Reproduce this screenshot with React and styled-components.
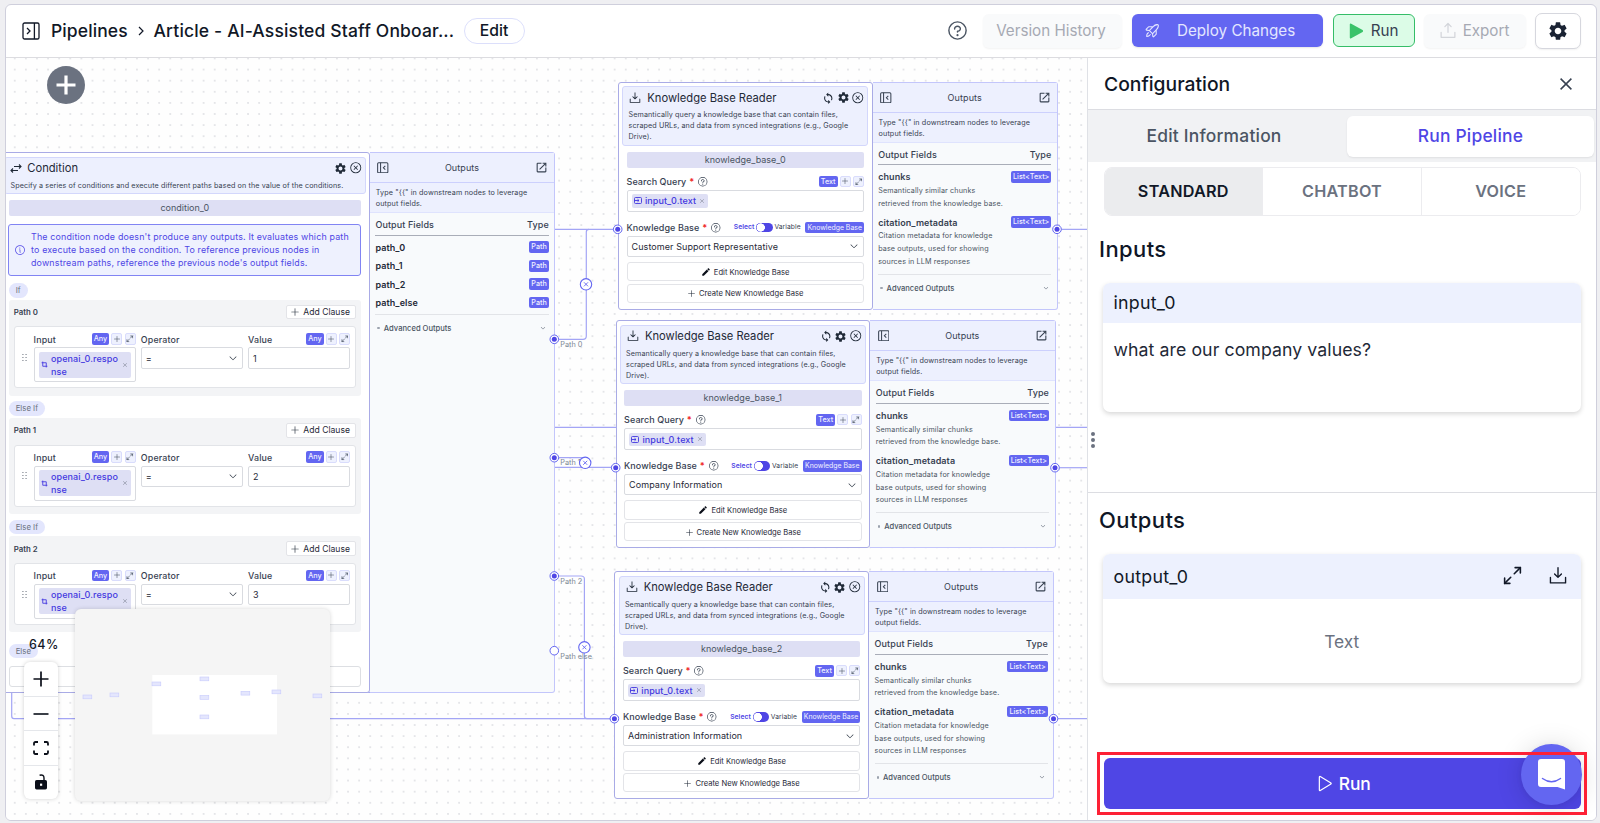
import styled, { createGlobalStyle, css } from 'styled-components'
import {
  PiCaretDown,
  PiDotsSixVertical,
  PiDownloadSimple,
  PiPlay,
  PiPlus,
  PiQuestion,
  PiRocketLaunch,
  PiUploadSimple,
  PiX,
  PiXCircle,
  PiInfo
} from 'react-icons/pi'
import { MdSettings, MdEdit, MdOpenInNew, MdSync } from 'react-icons/md'
import { Maximize2 } from 'lucide-react'

const knowledgeBases = [
  { id: 'knowledge_base_0', x: 612, y: 24, value: 'Customer Support Representative' },
  { id: 'knowledge_base_1', x: 609.6, y: 262.4, value: 'Company Information' },
  { id: 'knowledge_base_2', x: 608.4, y: 513.4, value: 'Administration Information' }
]

const clauses = [
  { tag: 'If', path: 'Path 0', value: '1' },
  { tag: 'Else If', path: 'Path 1', value: '2' },
  { tag: 'Else If', path: 'Path 2', value: '3' }
]

const edges = [
  'M540 171.3H612',
  'M540 369.3H1081',
  'M540 409.3H610',
  'M548 281.3H577Q580.3 281.3 580.3 278V174Q580.3 171.3 583 171.3',
  'M548 399.7H579V409.3',
  'M548 518H575Q578.4 518 578.4 521V658Q578.4 660.7 581 660.7H608',
  'M5.7 634V658Q5.7 660.7 8 660.7H608',
  'M0 634.5H364',
  'M1051 171.3H1081',
  'M1049 409.7H1081',
  'M1047.5 660.7H1081'
]

const handles = [
  [548.3, 281.3], [548.3, 399.7], [548.3, 518],
  [611.7, 171.3], [609.7, 409.7], [608.4, 660.7],
  [1051, 171.3], [1049, 409.7], [1047.5, 660.7]
]

const edgeButtons = [[580, 226.3], [579.2, 404.8], [578.4, 589.3]]

const edgeLabels = [
  { x: 554.3, y: 281, text: 'Path 0' },
  { x: 554.3, y: 399.3, text: 'Path 1' },
  { x: 554.3, y: 517.6, text: 'Path 2' },
  { x: 554.3, y: 592.6, text: 'Path else' }
]

const miniNodes = [
  [8, 86], [35, 84], [77, 73], [125, 68], [125, 86.5], [125, 106], [166, 82.3], [197, 81], [238, 85]
]

function PanelIcon({ size, flip }) {
  return (
    <svg width={size} height={size} viewBox="0 0 18 18" fill="none" stroke="currentColor" strokeWidth={flip ? 1.6 : 1.3}>
      <g transform={flip ? 'matrix(-1 0 0 1 18 0)' : undefined}>
        <rect x="1" y="1" width="16" height="16" rx="1.6" />
        <path d="M12.4 1v16" />
        <path d="M5 6L8 9L5 12" />
      </g>
    </svg>
  )
}

function SwapIcon() {
  return (
    <svg width="12" height="9" viewBox="0 0 24 16" fill="none" stroke="currentColor" strokeWidth="2.2">
      <path d="M8 4h14M18 0l4 4-4 4" />
      <path d="M16 12H2M6 8l-4 4 4 4" />
    </svg>
  )
}

function TopBar() {
  return (
    <Bar>
      <PanelIcon size={18} />
      <Crumb>Pipelines</Crumb>
      <Separator>
        <svg width="6" height="10" viewBox="0 0 6 10" fill="none" stroke="currentColor" strokeWidth="1.2">
          <path d="M1 1l4 4-4 4" />
        </svg>
      </Separator>
      <Title>Article - AI-Assisted Staff Onboar...</Title>
      <EditPill>Edit</EditPill>
      <Spacer />
      <HelpIcon />
      <BarButton $w={139} $left={14} $muted>Version History</BarButton>
      <BarButton $w={191} $h={33} $left={9.5} $primary>
        <PiRocketLaunch size={17} />
        <span>Deploy Changes</span>
      </BarButton>
      <BarButton $w={82} $h={33} $left={10} $run>
        <svg width="15" height="16" viewBox="0 0 15 16" fill="#3ac26a">
          <path d="M.8 1.5Q.8 0 2.2.8L13.6 7.1Q14.8 8 13.6 8.9L2.2 15.2Q.8 16 .8 14.5z" />
        </svg>
        <span>Run</span>
      </BarButton>
      <BarButton $w={102} $left={9.5} $muted>
        <PiUploadSimple size={20} />
        <span>Export</span>
      </BarButton>
      <GearButton>
        <MdSettings size={22} />
      </GearButton>
    </Bar>
  )
}

function TypeTools({ type }) {
  return (
    <Tools>
      <Badge>{type}</Badge>
      <Tool><PiPlus /></Tool>
      <Tool><Maximize2 size={7.5} /></Tool>
    </Tools>
  )
}

function AdvancedOutputs() {
  return (
    <Advanced>
      <Bullet />
      <span>Advanced Outputs</span>
      <PiCaretDown size={6} color="#6b7280" />
    </Advanced>
  )
}

function OutputsPanel({ width, children }) {
  return (
    <Side $w={width}>
      <SideHeader>
        <PanelIcon size={11.5} flip />
        <span>Outputs</span>
        <MdOpenInNew size={13} />
      </SideHeader>
      <SideHint>Type "{'{{'}" in downstream nodes to leverage<br />output fields.</SideHint>
      <Fields>
        <FieldsHead>
          <span>Output Fields</span>
          <span>Type</span>
        </FieldsHead>
        {children}
        <AdvancedOutputs />
      </Fields>
    </Side>
  )
}

function ConditionNode() {
  return (
    <Node $x={-6} $y={94.3} $h={540.4}>
      <Main $w={369.8}>
        <NodeHeader $h={37.7}>
          <NodeTitle>
            <SwapIcon />
            <h3>Condition</h3>
            <MdSettings size={13} />
            <PiXCircle size={13.5} />
          </NodeTitle>
          <p>Specify a series of conditions and execute different paths based on the value of the conditions.</p>
        </NodeHeader>
        <Body>
          <IdBar>condition_0</IdBar>
          <Info>
            <PiInfo size={12} />
            <p>
              The condition node doesn't produce any outputs. It evaluates which path<br />
              to execute based on the condition. To reference previous nodes in<br />
              downstream paths, reference the previous node's output fields.
            </p>
          </Info>
          {clauses.map((clause) => (
            <Clause key={clause.path} {...clause} />
          ))}
          <Tag $last>Else</Tag>
          <ElseBox />
        </Body>
      </Main>
      <OutputsPanel width={185.6}>
        {['path_0', 'path_1', 'path_2', 'path_else'].map((name) => (
          <PathRow key={name}>
            <strong>{name}</strong>
            <Badge>Path</Badge>
          </PathRow>
        ))}
      </OutputsPanel>
    </Node>
  )
}

function Clause({ tag, path, value }) {
  return (
    <>
      <Tag>{tag}</Tag>
      <Group>
        <GroupHead>
          <strong>{path}</strong>
          <AddClause><PiPlus size={10} /> Add Clause</AddClause>
        </GroupHead>
        <ClauseCard>
          <Grip><PiDotsSixVertical size={11} /></Grip>
          <Cell>
            <CellLabel>Input<TypeTools type="Any" /></CellLabel>
            <Box $h={35}>
              <Chip $tall>
                <svg width="7" height="7" viewBox="0 0 12 12" fill="none" stroke="currentColor" strokeWidth="1.5">
                  <path d="M3 1v8h8M1 3h8v8" />
                </svg>
                <span>openai_0.respo<br />nse</span>
                <PiX size={6} color="#6b7280" />
              </Chip>
            </Box>
          </Cell>
          <Cell>
            <CellLabel>Operator</CellLabel>
            <Box $h={21.4}>=<PiCaretDown size={10} /></Box>
          </Cell>
          <Cell>
            <CellLabel>Value<TypeTools type="Any" /></CellLabel>
            <Box $h={21.4}>{value}</Box>
          </Cell>
        </ClauseCard>
      </Group>
    </>
  )
}

function KnowledgeNode({ id, x, y, value }) {
  return (
    <Node $x={x} $y={y} $h={228}>
      <Main $w={254.6}>
        <NodeHeader $h={59.7}>
          <NodeTitle>
            <PiDownloadSimple size={14} />
            <h3>Knowledge Base Reader</h3>
            <MdSync size={12.5} />
            <MdSettings size={13} />
            <PiXCircle size={13.5} />
          </NodeTitle>
          <p>
            Semantically query a knowledge base that can contain files,<br />
            scraped URLs, and data from synced integrations (e.g., Google<br />
            Drive).
          </p>
        </NodeHeader>
        <Body>
          <IdBar>{id}</IdBar>
          <LabelRow $top={7.7}>
            Search Query <b>*</b> <PiQuestion size={11.5} />
            <TypeTools type="Text" />
          </LabelRow>
          <Box $h={21.7}>
            <Chip>
              <svg width="8" height="7" viewBox="0 0 16 14" fill="none" stroke="currentColor" strokeWidth="1.8">
                <rect x="1" y="1" width="14" height="12" rx="2" />
                <path d="M1 7h9M7 4.4L10 7L7 9.6" />
              </svg>
              <span>input_0.text</span>
              <PiX size={6} color="#6b7280" />
            </Chip>
          </Box>
          <LabelRow $top={9.9}>
            Knowledge Base <b>*</b> <PiQuestion size={11.5} />
            <Toggle>
              <em>Select</em>
              <Switch />
              <span>Variable</span>
              <Badge $small>Knowledge Base</Badge>
            </Toggle>
          </LabelRow>
          <Box $h={20.7}>{value}<PiCaretDown size={10} /></Box>
          <NodeButton $top={5.3}><MdEdit size={10} color="#0b0f19" /> Edit Knowledge Base</NodeButton>
          <NodeButton $top={2.3}><PiPlus size={9} /> Create New Knowledge Base</NodeButton>
        </Body>
      </Main>
      <OutputsPanel width={185.4}>
        <OutputField>
          <div><strong>chunks</strong><Badge>List&lt;Text&gt;</Badge></div>
          <p>Semantically similar chunks<br />retrieved from the knowledge base.</p>
        </OutputField>
        <OutputField>
          <div><strong>citation_metadata</strong><Badge>List&lt;Text&gt;</Badge></div>
          <p>Citation metadata for knowledge<br />base outputs, used for showing<br />sources in LLM responses</p>
        </OutputField>
      </OutputsPanel>
    </Node>
  )
}

function Controls() {
  return (
    <ControlColumn>
      <Zoom>64%</Zoom>
      <ControlStack>
        <Control>
          <svg width="16" height="16" viewBox="0 0 16 16" stroke="#0b0f19" strokeWidth="1.7"><path d="M8 .5v15M.5 8h15" /></svg>
        </Control>
        <Control>
          <svg width="16" height="16" viewBox="0 0 16 16" stroke="#0b0f19" strokeWidth="1.6"><path d="M.5 8h15" /></svg>
        </Control>
        <Control>
          <svg width="16" height="14" viewBox="0 0 16 14" fill="none" stroke="#0b0f19" strokeWidth="1.8">
            <path d="M1 4.6V2.4Q1 1 2.4 1H5M11 1h2.6Q15 1 15 2.4v2.2M15 9.4v2.2Q15 13 13.6 13H11M5 13H2.4Q1 13 1 11.6V9.4" />
          </svg>
        </Control>
        <Control>
          <svg width="12" height="16" viewBox="0 0 12 16">
            <path d="M4.6 1.2Q9 .2 9 4v3" fill="none" stroke="#0b0f19" strokeWidth="1.4" />
            <rect y="6" width="12" height="9.4" rx="1.6" fill="#0b0f19" />
            <rect x="5" y="9.6" width="2.2" height="2.2" fill="#fff" />
          </svg>
        </Control>
      </ControlStack>
    </ControlColumn>
  )
}

function Canvas() {
  return (
    <Board>
      <Layer viewBox="0 0 1081 762">
        {edges.map((d) => (
          <path key={d} d={d} fill="none" stroke="#a3a5f5" strokeWidth="1.2" />
        ))}
      </Layer>
      {edgeLabels.map((label) => (
        <EdgeLabel key={label.text} $x={label.x} $y={label.y}>{label.text}</EdgeLabel>
      ))}
      <ConditionNode />
      {knowledgeBases.map((kb) => (
        <KnowledgeNode key={kb.id} {...kb} />
      ))}
      <Layer viewBox="0 0 1081 762">
        {handles.map(([x, y]) => (
          <g key={`${x}-${y}`}>
            <circle cx={x} cy={y} r="4.3" fill="#fff" stroke="#6366f1" />
            <circle cx={x} cy={y} r="2.5" fill="#4f46e5" />
          </g>
        ))}
        <circle cx="548.3" cy="592.7" r="4.3" fill="#fff" stroke="#6366f1" />
        {edgeButtons.map(([x, y]) => (
          <g key={y} stroke="#6366f1">
            <circle cx={x} cy={y} r="5.7" fill="#fff" strokeWidth="1.1" />
            <path d={`M${x - 2} ${y - 2}l4 4m0 -4l-4 4`} strokeWidth="0.9" />
          </g>
        ))}
      </Layer>
      <AddNode>
        <svg width="20" height="20" viewBox="0 0 20 20" stroke="#fff" strokeWidth="3.2"><path d="M10 .5v19M.5 10h19" /></svg>
      </AddNode>
      <MiniMap>
        <svg width="255" height="192" viewBox="0 0 255 192">
          <rect x="77.3" y="66" width="124.7" height="59.4" fill="#fff" />
          {miniNodes.map(([x, y]) => (
            <rect key={`${x}-${y}`} x={x} y={y} width="8.8" height="3.8" fill="#e4e6fd" stroke="#c7cafc" strokeWidth="0.6" />
          ))}
        </svg>
      </MiniMap>
      <Controls />
    </Board>
  )
}

function Configuration() {
  return (
    <Panel>
      <PanelTitle>
        <h2>Configuration</h2>
        <svg width="12" height="12" viewBox="0 0 12 12" stroke="#374151" strokeWidth="1.5"><path d="M.6 .6l10.8 10.8M11.4 .6L.6 11.4" /></svg>
      </PanelTitle>
      <Tabs>
        <Tab>Edit Information</Tab>
        <Tab $active>Run Pipeline</Tab>
      </Tabs>
      <Segments>
        <Segment $active>STANDARD</Segment>
        <Segment>CHATBOT</Segment>
        <Segment>VOICE</Segment>
      </Segments>
      <Section $h={275.5}>
        <SectionTitle>Inputs</SectionTitle>
        <Card>
          <CardHeader $h={40.3}>input_0</CardHeader>
          <CardText>what are our company values?</CardText>
        </Card>
        <DragDots><i /><i /><i /></DragDots>
      </Section>
      <Section $h={260.5} $line>
        <SectionTitle>Outputs</SectionTitle>
        <Card>
          <CardHeader $h={45}>
            output_0
            <CardIcons>
              <Maximize2 size={21} strokeWidth={1.8} />
              <PiDownloadSimple size={22} />
            </CardIcons>
          </CardHeader>
          <CardEmpty>Text</CardEmpty>
        </Card>
      </Section>
      <RunFrame>
        <RunButton>
          <PiPlay size={19} />
          Run
        </RunButton>
        <ChatBubble>
          <svg width="27" height="31" viewBox="0 0 27 31">
            <path d="M3 0H24Q27 0 27 3V30.6L19.5 28H3Q0 28 0 25V3Q0 0 3 0z" fill="#fff" />
            <path d="M4.5 19.5Q13.5 26 22.5 19.5" fill="none" stroke="#6366f1" strokeWidth="1.5" strokeLinecap="round" />
          </svg>
        </ChatBubble>
        <Highlight />
      </RunFrame>
    </Panel>
  )
}

export default function App() {
  return (
    <Page>
      <GlobalStyle />
      <Window>
        <TopBar />
        <Workspace>
          <Canvas />
          <Configuration />
        </Workspace>
      </Window>
    </Page>
  )
}

const GlobalStyle = createGlobalStyle`
  * {
    box-sizing: border-box;
  }

  body {
    margin: 0;
    font-family: Inter, sans-serif;
    color: #1f2937;
  }

  h2, h3, p {
    margin: 0;
    font-weight: 400;
  }

  svg {
    flex: none;
    display: block;
  }
`

const Page = styled.div`
  width: 1600px;
  height: 823px;
  padding: 4px 3px 2px 5px;
  background: #efeff2;
  overflow: hidden;
`

const Window = styled.div`
  display: flex;
  flex-direction: column;
  height: 817px;
  border: 1px solid #cfcfdc;
  border-radius: 6px;
  background: #fff;
  overflow: hidden;
`

const Bar = styled.header`
  display: flex;
  align-items: center;
  height: 53px;
  flex: none;
  padding: 0 15px 1px 15.5px;
  border-bottom: 1px solid #dcdce0;
  color: #111827;
`

const Crumb = styled.span`
  margin-left: 11.5px;
  width: 77px;
  font-size: 17.5px;
  font-weight: 500;
  letter-spacing: 0.1px;
  white-space: nowrap;
`

const Separator = styled.span`
  margin: 0 10px 0 9.5px;
`

const Title = styled.span`
  width: 300px;
  font-size: 17.5px;
  font-weight: 500;
  letter-spacing: 0.16px;
  white-space: nowrap;
`

const EditPill = styled.button`
  width: 61px;
  height: 26px;
  margin-left: 10px;
  border: 1px solid #dcdffb;
  border-radius: 13px;
  background: #fff;
  font: 500 15.7px Inter, sans-serif;
  color: #111827;
`

const Spacer = styled.div`
  flex: 1;
`

const HelpIcon = styled(PiQuestion)`
  width: 23px;
  height: 23px;
  color: #4b5563;
`

const BarButton = styled.button`
  display: flex;
  align-items: center;
  justify-content: center;
  flex: none;
  width: ${({ $w }) => $w}px;
  height: ${({ $h }) => $h || 34}px;
  margin-left: ${({ $left }) => $left}px;
  padding: 0;
  border: none;
  border-radius: 6px;
  font: 400 15.2px Inter, sans-serif;
  white-space: nowrap;

  ${({ $muted }) => $muted && css`
    padding-right: 3px;
    background: #f9fafb;
    color: #a6a9b3;
    box-shadow: 0 1px 2px rgba(0, 0, 0, 0.05);
    gap: 5px;
    svg { color: #d3d5da; }
  `}

  ${({ $primary }) => $primary && css`
    justify-content: flex-start;
    padding-left: 12px;
    gap: 16.5px;
    background: #6366f1;
    color: #e4e6ff;
    box-shadow: 0 1px 2px rgba(0, 0, 0, 0.1);
  `}

  ${({ $run }) => $run && css`
    gap: 7px;
    border: 1px solid #35bd68;
    background: #dcfce7;
    color: #374151;
  `}
`

const GearButton = styled.button`
  display: grid;
  place-items: center;
  flex: none;
  width: 46px;
  height: 36px;
  margin-left: 9px;
  padding: 0;
  border: 1px solid #d6d7de;
  border-radius: 7px;
  background: #fff;
  color: #1a2333;
  box-shadow: 0 1px 2px rgba(0, 0, 0, 0.06);
`

const Workspace = styled.div`
  display: flex;
  flex: 1;
`

const Board = styled.div`
  position: relative;
  width: 1081px;
  flex: none;
  overflow: hidden;
  background: #fefefe radial-gradient(circle, #e0e1e5 0.6px, transparent 1px) 3.2px 6px / 11.12px 11.12px;
`

const Layer = styled.svg`
  position: absolute;
  left: 0;
  top: 0;
  width: 1081px;
  height: 762px;
`

const EdgeLabel = styled.span`
  position: absolute;
  left: ${({ $x }) => $x}px;
  top: ${({ $y }) => $y}px;
  font-size: 7.3px;
  line-height: 12px;
  color: #7b8794;
`

const Node = styled.section`
  position: absolute;
  left: ${({ $x }) => $x}px;
  top: ${({ $y }) => $y}px;
  height: ${({ $h }) => $h}px;
  display: flex;
`

const Main = styled.div`
  position: relative;
  width: ${({ $w }) => $w}px;
  border: 1px solid #a9abe6;
  border-radius: 3px;
  background: #fff;
`

const NodeHeader = styled.div`
  height: ${({ $h }) => $h}px;
  margin: 3.3px 3.3px 0;
  padding: 0 2.4px 0 5.2px;
  border: 1px solid #d3d7fc;
  border-radius: 3px;
  background: #edf0fe;

  p {
    padding-top: 1.2px;
    font-size: 7.2px;
    line-height: 11px;
    letter-spacing: 0.1px;
    color: #374151;
    white-space: nowrap;
  }
`

const NodeTitle = styled.div`
  display: flex;
  align-items: center;
  gap: 1.8px;
  height: 21px;

  h3 {
    flex: 1;
    margin-left: 3px;
    font-size: 11.2px;
    white-space: nowrap;
  }
`

const Body = styled.div`
  padding: 6px 7.7px 0 7.5px;
`

const IdBar = styled.div`
  height: 16px;
  border-radius: 2px;
  background: #dedff4;
  font-size: 9px;
  line-height: 16.4px;
  text-align: center;
  color: #4b5563;
`

const Info = styled.div`
  display: flex;
  align-items: center;
  height: 51.6px;
  margin: 8px 0 7.3px -0.3px;
  padding-left: 5px;
  border: 1px solid #8184f3;
  border-radius: 3px;
  background: #eef1fe;
  color: #4f46e5;

  p {
    margin: -0.6px 0 0 4.8px;
    font-size: 8.9px;
    line-height: 13px;
    letter-spacing: 0.17px;
    white-space: nowrap;
  }
`

const Tag = styled.div`
  width: fit-content;
  height: 14.8px;
  margin-top: ${({ $last }) => ($last ? 11.6 : 0)}px;
  padding: 0 7.2px;
  border-radius: 8px;
  background: #e3e6fd;
  font-size: 7.8px;
  line-height: 15px;
  color: #6b7280;
`

const Group = styled.div`
  height: 95.7px;
  margin: 2px 0 5.7px;
  padding: 5.1px 5.3px 0;
  border-radius: 3px;
  background: #f3f4f6;
`

const GroupHead = styled.div`
  display: flex;
  align-items: center;
  justify-content: space-between;

  strong {
    font-size: 7.8px;
    font-weight: 600;
    color: #374151;
  }
`

const AddClause = styled.div`
  display: flex;
  align-items: center;
  justify-content: center;
  gap: 3px;
  width: 70.3px;
  height: 14.4px;
  padding-right: 1px;
  border: 1px solid #e3e4e8;
  border-radius: 2px;
  background: #fff;
  font-size: 8.6px;
`

const ClauseCard = styled.div`
  display: flex;
  gap: 5.3px;
  height: 62px;
  margin-top: 7px;
  padding: 5.8px 4.8px 0 4px;
  border: 1px solid #e2e4e8;
  border-radius: 3px;
  background: #fff;
`

const Grip = styled.div`
  width: 9.5px;
  padding-top: 19px;
  color: #374151;
`

const Cell = styled.div`
  flex: 1;
  min-width: 0;
`

const CellLabel = styled.div`
  display: flex;
  justify-content: space-between;
  align-items: center;
  height: 11.7px;
  margin-bottom: 2.4px;
  font-size: 8.9px;
  font-weight: 500;
  letter-spacing: 0.15px;
  color: #374151;
`

const Tools = styled.div`
  display: flex;
  gap: 2.2px;
  margin-left: auto;
`

const Badge = styled.span`
  height: 11.6px;
  padding: 0 2px;
  border-radius: 2px;
  background: #6366f1;
  font-size: ${({ $small }) => ($small ? 6.9 : 7.2)}px;
  font-weight: ${({ $small }) => ($small ? 400 : 500)};
  line-height: 11.6px;
  letter-spacing: 0;
  color: #f1f1ff;
  white-space: nowrap;
`

const Tool = styled.span`
  display: grid;
  place-items: center;
  width: 11px;
  height: 11.4px;
  border: 1px solid #d9dcfc;
  border-radius: 2px;
  background: #eef1fe;
  font-size: 8px;
  color: #374151;
`

const Box = styled.div`
  display: flex;
  align-items: center;
  justify-content: space-between;
  height: ${({ $h }) => $h}px;
  padding: 0 4px;
  border: 1px solid #d9dbe0;
  border-radius: 2px;
  background: #fff;
  font-size: 9px;
  letter-spacing: 0.08px;
  white-space: nowrap;
`

const Chip = styled.div`
  display: flex;
  align-items: center;
  gap: 3px;
  width: ${({ $tall }) => ($tall ? '93px' : 'auto')};
  height: ${({ $tall }) => ($tall ? 26.6 : 13.4)}px;
  padding: 0 3px 0 2.4px;
  border-radius: 2px;
  background: #dedff4;
  font-size: 9px;
  font-weight: 500;
  letter-spacing: 0.1px;
  line-height: 13.3px;
  color: #4338e0;

  span {
    flex: 1;
  }
`

const ElseBox = styled.div`
  height: 20.8px;
  margin-top: 7.6px;
  border: 1px solid #dddfe3;
  border-radius: 3px;
`

const LabelRow = styled.div`
  display: flex;
  align-items: center;
  gap: 2.8px;
  height: 11.6px;
  margin: ${({ $top }) => $top}px 0 2.8px;
  font-size: 9px;
  font-weight: 500;
  letter-spacing: 0.07px;
  color: #374151;
  white-space: nowrap;

  b {
    color: #ef2b2b;
  }
`

const Toggle = styled.div`
  display: flex;
  align-items: center;
  gap: 1.8px;
  margin-left: auto;
  font-size: 6.7px;
  font-weight: 400;

  em {
    font-style: normal;
    font-weight: 600;
    color: #4f46e5;
  }

  ${Badge} {
    margin-left: 3px;
  }
`

const Switch = styled.i`
  width: 16.4px;
  height: 9.4px;
  border-radius: 5px;
  background: radial-gradient(circle at 4.7px 50%, #fff 3.9px, #4f46e5 4.4px);
`

const NodeButton = styled.div`
  display: flex;
  align-items: center;
  justify-content: center;
  gap: 3px;
  height: 19.4px;
  margin-top: ${({ $top }) => $top}px;
  padding-top: 0.6px;
  border: 1px solid #e3e4e8;
  border-radius: 3px;
  font-size: 7.6px;
  white-space: nowrap;
`

const Side = styled.div`
  width: ${({ $w }) => $w}px;
  border: 1px solid #c3c6fb;
  border-left: none;
  border-radius: 0 3px 3px 0;
  background: #f8fafc;
`

const SideHeader = styled.div`
  display: flex;
  align-items: center;
  justify-content: space-between;
  height: 29.6px;
  padding: 0 6.2px 0 7.6px;
  border-bottom: 1px solid #ccd0fd;
  background: #edf0fe;
  font-size: 9px;
  letter-spacing: 0.1px;
  color: #374151;
`

const SideHint = styled.div`
  height: 30.4px;
  padding: 4.1px 6px 0;
  border-bottom: 1px solid #dfe3fe;
  background: #edf0fe;
  font-size: 7.2px;
  line-height: 11px;
  letter-spacing: 0.12px;
  color: #374151;
  white-space: nowrap;
`

const Fields = styled.div`
  padding: 0 5.6px;
`

const FieldsHead = styled.div`
  display: flex;
  align-items: center;
  justify-content: space-between;
  height: 22.5px;
  padding-top: 0.8px;
  border-bottom: 1px solid #a9adb8;
  font-size: 9px;
  font-weight: 500;
  letter-spacing: 0.1px;
  color: #374151;
`

const PathRow = styled.div`
  display: flex;
  align-items: center;
  justify-content: space-between;
  height: 11.7px;
  margin-top: 6.8px;
  font-size: 9px;
  letter-spacing: 0.1px;

  ${FieldsHead} + & {
    margin-top: 5.6px;
  }

  strong {
    font-weight: 600;
  }
`

const OutputField = styled.div`
  padding-top: 5.6px;

  div {
    display: flex;
    align-items: center;
    justify-content: space-between;
    height: 11.7px;
    font-size: 9px;
  }

  strong {
    font-weight: 600;
    letter-spacing: 0.08px;
    color: #374151;
  }

  p {
    margin-top: 2.5px;
    font-size: 7.2px;
    line-height: 12.7px;
    letter-spacing: 0.12px;
    color: #4b5563;
    white-space: nowrap;
  }
`

const Advanced = styled.div`
  display: flex;
  align-items: center;
  height: 27px;
  margin-top: 5.5px;
  padding-right: 2.5px;
  border-top: 1px solid #e2e4e8;
  font-size: 7.6px;
  font-weight: 500;
  color: #4b5563;

  span {
    flex: 1;
  }
`

const Bullet = styled.i`
  width: 2.6px;
  height: 2.6px;
  margin: 0 3.8px 0 2px;
  border-radius: 50%;
  background: #9ca3af;
`

const AddNode = styled.button`
  position: absolute;
  left: 41px;
  top: 8px;
  display: grid;
  place-items: center;
  width: 38px;
  height: 38px;
  padding: 0;
  border: none;
  border-radius: 50%;
  background: #6b7280;
`

const MiniMap = styled.div`
  position: absolute;
  left: 69px;
  top: 551px;
  width: 255px;
  height: 192px;
  border-radius: 6px;
  background: #f5f5f5;
  box-shadow: 0 0 4px rgba(0, 0, 0, 0.16);
`

const ControlColumn = styled.div`
  position: absolute;
  left: 18px;
  top: 578px;
  width: 34px;
`

const Zoom = styled.div`
  height: 26px;
  padding-left: 5px;
  font-size: 12.5px;
  font-weight: 500;
  line-height: 17px;
  letter-spacing: 0.4px;
  color: #111827;
`

const ControlStack = styled.div`
  border-radius: 6px;
  background: #fff;
  box-shadow: 0 0 4px rgba(0, 0, 0, 0.18);
`

const Control = styled.div`
  display: grid;
  place-items: center;
  height: 34.2px;

  & + & {
    border-top: 1px solid #e5e7eb;
  }
`

const Panel = styled.aside`
  flex: 1;
  border-left: 1px solid #dfe1e6;
  background: #fff;
`

const PanelTitle = styled.div`
  display: flex;
  align-items: center;
  justify-content: space-between;
  height: 52px;
  padding: 0 24.5px 0 16px;
  border-bottom: 1px solid #dcdde2;

  h2 {
    font-size: 19.3px;
    font-weight: 500;
    color: #0f1626;
  }
`

const Tabs = styled.div`
  display: flex;
  height: 51.5px;
  padding: 6px 2px 5px 0;
  background: #f1f2f4;
`

const Tab = styled.div`
  display: grid;
  place-items: center;
  width: ${({ $active }) => ($active ? 247 : 259)}px;
  padding: ${({ $active }) => ($active ? '0 0 1px' : '0 7px 1px 0')};
  border-radius: 6px;
  font-size: 17.4px;
  font-weight: 500;
  letter-spacing: 0.22px;
  background: ${({ $active }) => ($active ? '#fff' : 'none')};
  color: ${({ $active }) => ($active ? '#4f46e5' : '#4b5563')};
  box-shadow: ${({ $active }) => ($active ? '0 1px 2px rgba(0, 0, 0, 0.08)' : 'none')};
`

const Segments = styled.div`
  display: flex;
  width: 477px;
  height: 49px;
  margin: 5.5px 0 0 15.5px;
  border: 1px solid #ececef;
  border-radius: 8px;
  overflow: hidden;
`

const Segment = styled.div`
  display: grid;
  place-items: center;
  flex: 1;
  padding-bottom: 1px;
  font-size: 16.2px;
  font-weight: 600;
  letter-spacing: 0.25px;
  background: ${({ $active }) => ($active ? '#ebecee' : '#fff')};
  color: ${({ $active }) => ($active ? '#111827' : '#6b7280')};

  & + & {
    border-left: 1px solid #ececef;
  }
`

const Section = styled.section`
  position: relative;
  height: ${({ $h }) => $h}px;
  padding: ${({ $line }) => ($line ? '13px' : '18.5px')} 15px 0 11px;
  border-top: ${({ $line }) => ($line ? '1px solid #dcdde2' : 'none')};
`

const SectionTitle = styled.h2`
  height: 48px;
  font-size: 22px;
  font-weight: 500;
  line-height: 28px;
  letter-spacing: 0.4px;
  color: #0f1626;
`

const Card = styled.div`
  width: 477.5px;
  height: 129px;
  margin-left: 4px;
  border-radius: 7px;
  background: #fff;
  box-shadow: 0 2px 5px rgba(0, 0, 0, 0.16);
  overflow: hidden;
`

const CardHeader = styled.div`
  display: flex;
  align-items: center;
  justify-content: space-between;
  height: ${({ $h }) => $h}px;
  padding: 0 12px 0 10.5px;
  background: #edf1fe;
  font-size: 17.8px;
  letter-spacing: 0.25px;
  color: #111827;
`

const CardIcons = styled.div`
  display: flex;
  gap: 24px;
`

const CardText = styled.p`
  padding: 16px 10.5px;
  font-size: 17.7px;
  line-height: 22px;
  letter-spacing: 0.08px;
`

const CardEmpty = styled.p`
  font-size: 17.4px;
  line-height: 85px;
  text-align: center;
  color: #6b7280;
`

const DragDots = styled.div`
  position: absolute;
  left: 3px;
  top: 215.5px;
  display: flex;
  flex-direction: column;
  gap: 2.4px;

  i {
    width: 4px;
    height: 4px;
    border-radius: 50%;
    background: #6b7280;
  }
`

const RunFrame = styled.div`
  position: relative;
  width: 490px;
  height: 63px;
  margin-left: 9px;
  padding: 6px 6px 6px 6.5px;
`

const RunButton = styled.button`
  display: flex;
  align-items: center;
  justify-content: center;
  gap: 6px;
  width: 100%;
  height: 51px;
  border: none;
  border-radius: 6px;
  background: #4f46e5;
  font: 500 17.4px Inter, sans-serif;
  color: #fff;
`

const ChatBubble = styled.div`
  position: absolute;
  left: 424px;
  top: -8px;
  display: grid;
  place-items: center;
  width: 61px;
  height: 61px;
  border-radius: 50%;
  background: #6366f1;
  box-shadow: 0 1px 6px rgba(0, 0, 0, 0.06), 0 2px 28px rgba(0, 0, 0, 0.14);
`

const Highlight = styled.div`
  position: absolute;
  inset: 0;
  border: 3.4px solid #fd2135;
`
